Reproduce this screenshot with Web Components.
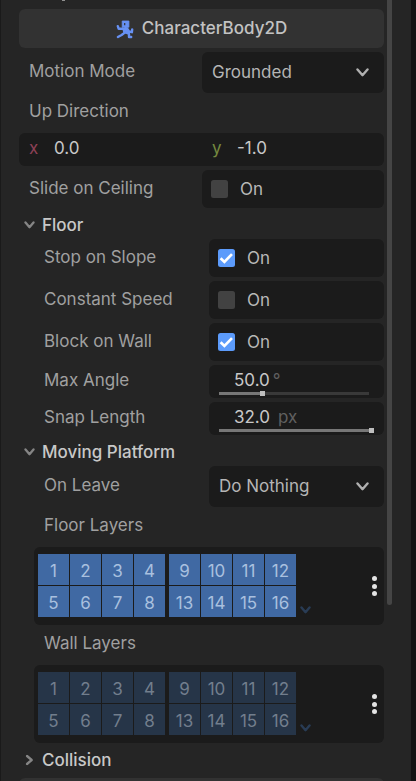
<!DOCTYPE html>
<html lang="en"><head><meta charset="utf-8"><title>Inspector</title>
<style>
html,body{margin:0;height:100%;overflow:hidden;background:#252525}
</style></head><body>
<inspector-dock>
<class-header>CharacterBody2D</class-header>
<prop-row label="Motion Mode" style="--h:40.5px"><option-field>Grounded</option-field></prop-row>
<prop-title style="--h:32.5px;--x:10px">Up Direction</prop-title>
<vector-field x="0.0" y="-1.0"></vector-field>
<prop-row label="Slide on Ceiling" style="--h:38px"><check-field></check-field></prop-row>
<section-title open style="--h:23px;--p:2px">Floor</section-title>
<prop-row nested label="Stop on Slope" style="--h:38px"><check-field checked></check-field></prop-row>
<prop-row nested label="Constant Speed" style="--h:38px"><check-field></check-field></prop-row>
<prop-row nested label="Block on Wall" style="--h:38px"><check-field checked></check-field></prop-row>
<prop-row nested label="Max Angle" style="--h:33px;--b:4px"><slider-field value="50.0" unit="°" fill="42" track="150"></slider-field></prop-row>
<prop-row nested label="Snap Length" style="--h:33px;--b:4px"><slider-field value="32.0" unit="px" fill="151" track="151"></slider-field></prop-row>
<section-title open style="--h:23px;--p:2px">Moving Platform</section-title>
<prop-row nested label="On Leave" style="--h:41px;--b:4px"><option-field>Do Nothing</option-field></prop-row>
<prop-title style="--h:32px;--x:25px;--b:5px">Floor Layers</prop-title>
<layer-grid active></layer-grid>
<prop-title style="--h:32px;--x:25px;--b:5px">Wall Layers</prop-title>
<layer-grid></layer-grid>
<section-title style="--h:27px;--q:2px">Collision</section-title>
<next-header></next-header>
</inspector-dock>
<script>
function define(name, render) {
  customElements.define(name, class extends HTMLElement {
    connectedCallback() {
      if (this.shadowRoot) return;
      this.attachShadow({mode: 'open'}).innerHTML = render(this);
    }
  });
}
const chevron = (w, h, color, sw = 2.4) =>
  `<svg width="${w}" height="${h}" viewBox="0 0 ${w} ${h}" style="display:block;flex:none"><path d="M1.5 1.5L${w/2} ${h-1.8}L${w-1.5} 1.5" fill="none" stroke="${color}" stroke-width="${sw}" stroke-linecap="round" stroke-linejoin="round"/></svg>`;

define('inspector-dock', () => `<style>
:host{display:grid;grid-template-columns:1px 383px 8px 19px 5px;height:781px;overflow:hidden;background:#252525;color:#a0a0a0;font:400 17px/20px Inter,sans-serif}
.edge{background:#1a1a1a}.end{background:#141414}
main{padding:9px 0 0 18px;display:flex;flex-direction:column;gap:4px;position:relative;min-height:0}
.peek{position:absolute;left:61px;top:0;width:3px;height:1px;background:#909090}
.bar{margin-left:3px;width:5px;height:605px;background:#454545;border-radius:0 0 3px 3px}
</style><div class="edge"></div><main><div class="peek"></div><slot></slot></main><div class="bar"></div><div></div><div class="end"></div>`);

define('class-header', () => `<style>
:host{flex:none;height:39px;border-radius:6px;background:#323232;color:#c2c2c2;display:flex;align-items:center;justify-content:center;gap:8px;font-weight:500}
svg{flex:none;margin-top:2px}.t{position:relative;top:-.5px}
</style><svg width="18" height="19" viewBox="0 0 18 19"><path d="M6.2 1H12.9V7.2H6.2Z" fill="#6791f3" stroke="#6791f3" stroke-width=".8" stroke-linejoin="round"/><path d="M6.5 8.8H2.7L1.8 6.2M9.5 8L8.8 12.6L5.6 15L1.9 17M9.5 12.2L13 13.8V17H15.2M11 8.4L13 11.5L15.9 12.2L16.2 9.4" fill="none" stroke="#6791f3" stroke-width="2.4" stroke-linejoin="round" stroke-linecap="round"/><path d="M6 7.5H11.5L12.5 13L7.5 13.5Z" fill="#6791f3"/><path d="M8.7 3V5.2" stroke="#323232" stroke-width="1.2"/></svg><span class="t"><slot></slot></span>`);

define('next-header', () => `<style>:host{flex:none;height:20px;border-radius:6px;background:#323232}</style>`);

define('prop-row', el => `<style>
:host{flex:none;display:grid;grid-template-columns:183px 182px;height:var(--h)}
:host([nested]){grid-template-columns:190px 175px}
label{padding-left:10px;padding-bottom:var(--b,2px);display:flex;align-items:center;white-space:nowrap}
:host([nested]) label{padding-left:25px}
</style><label>${el.getAttribute('label')}</label><slot></slot>`);

define('prop-title', () => `<style>:host{flex:none;display:flex;align-items:center;height:var(--h);padding-left:var(--x);box-sizing:border-box;padding-bottom:var(--b,3px)}</style><slot></slot>`);

define('section-title', el => `<style>
:host{flex:none;display:flex;align-items:center;height:var(--h);box-sizing:border-box;padding-top:var(--p,0);padding-bottom:var(--q,0);color:#c8c8c8;font-weight:500}
.i{width:23px;padding-left:5px;box-sizing:border-box}
.r{transform:rotate(-90deg);width:11px}
</style><div class="i"><div class="${el.hasAttribute('open') ? '' : 'r'}">${chevron(11, 8, '#858585', 2.3)}</div></div><slot></slot>`);

define('option-field', () => `<style>
:host{display:flex;align-items:center;justify-content:space-between;background:#1b1b1b;border-radius:6px;color:#b5b5b5;padding:0 15px 0 10px}
span{padding-bottom:1px}
</style><span><slot></slot></span>${chevron(13, 9, '#b0b0b0')}`);

define('check-field', el => `<style>
:host{display:flex;align-items:center;gap:12px;background:#1b1b1b;border-radius:6px;color:#b8b8b8;padding-left:9px}
i{width:17px;height:18px;border-radius:2.5px;background:#424242}
:host([checked]) i{background:#5c9bfb}
svg{display:block}
</style><i>${el.hasAttribute('checked') ? '<svg width="17" height="18" viewBox="0 0 17 18"><path d="M2.6 9.3L6.4 12.9L14 5.1" fill="none" stroke="#fff" stroke-width="2.7"/></svg>' : ''}</i><span>On</span>`);

define('vector-field', el => `<style>
:host{flex:none;height:33px;background:#1b1b1b;border-radius:6px;color:#c8c8c8;display:grid;grid-template-columns:183px 182px;align-items:center}
div{display:flex;padding:0 0 3px 10px}
b{font-weight:400;width:25px}.x{color:#8d4156}.y{color:#75893f}
</style><div><b class="x">x</b>${el.getAttribute('x')}</div><div><b class="y">y</b>${el.getAttribute('y')}</div>`);

define('slider-field', el => `<style>
:host{display:flex;flex-direction:column;background:#1b1b1b;border-radius:6px;color:#c8c8c8;padding:5px 0 0 10px}
.v{display:flex;padding-left:15px;height:20px}
.u{color:#606060;margin-left:${el.getAttribute('unit') === 'px' ? 8 : 3}px}
.t{width:${el.getAttribute('track')}px;height:3px;margin-top:2px;background:#393939;display:flex;align-items:center}
.f{flex:none;width:${el.getAttribute('fill')}px;height:3px;background:#777}
.k{width:5px;height:5px;background:#bebebe;flex:none;margin-left:-1px}
</style><div class="v">${el.getAttribute('value')}<span class="u">${el.getAttribute('unit')}</span></div><div class="t"><div class="f"></div><div class="k"></div></div>`);

define('layer-grid', el => {
  const block = s => `<div class="g">${[0,1,2,3,4,5,6,7].map(n => `<span>${s + n}</span>`).join('')}</div>`;
  return `<style>
:host{flex:none;display:flex;margin-left:15px;height:78px;box-sizing:border-box;background:#1b1b1b;border-radius:6px;padding:7px 6px 8px 4px;--c:#263548;--n:#727e8d;--a:#293c55}
:host([active]){--c:#4069a3;--n:#a9c0df}
.g{display:grid;grid-template:31px 31px/repeat(4,31px);gap:1px;margin-right:4px;height:63px}
span{background:var(--c);color:var(--n);display:flex;align-items:center;justify-content:center;padding-top:2px;box-sizing:border-box}
.a{align-self:flex-end;margin:0 auto 3px 0}
.m{align-self:center;display:grid;gap:2.5px;padding-top:1px;margin-right:1.5px}
.m i{width:5px;height:5px;border-radius:50%;background:#e4e4e4}
</style>${block(1)}${block(9)}<div class="a">${chevron(11, 8, 'var(--a)')}</div><div class="m"><i></i><i></i><i></i></div>`;
});
</script></body></html>
